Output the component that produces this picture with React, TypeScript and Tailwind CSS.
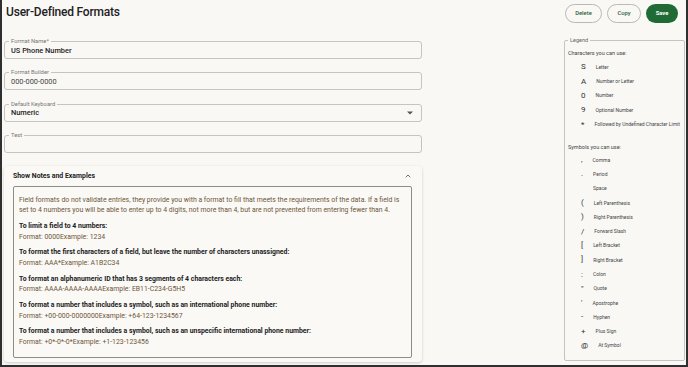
import { ChevronUp } from "lucide-react";

const chars = [
  { sym: "S", label: "Letter" },
  { sym: "A", label: "Number or Letter" },
  { sym: "0", label: "Number" },
  { sym: "9", label: "Optional Number" },
  { sym: "*", label: "Followed by Undefined Character Limit" },
];

const symbols = [
  { sym: ",", label: "Comma" },
  { sym: ".", label: "Period" },
  { sym: "\u00a0", label: "Space" },
  { sym: "(", label: "Left Parenthesis" },
  { sym: ")", label: "Right Parenthesis" },
  { sym: "/", label: "Forward Slash" },
  { sym: "[", label: "Left Bracket" },
  { sym: "]", label: "Right Bracket" },
  { sym: ":", label: "Colon" },
  { sym: "\"", label: "Quote" },
  { sym: "'", label: "Apostrophe" },
  { sym: "-", label: "Hyphen" },
  { sym: "+", label: "Plus Sign" },
  { sym: "@", label: "At Symbol" },
];

const examples = [
  { title: "To limit a field to 4 numbers:", format: "0000", example: "1234" },
  {
    title: "To format the first characters of a field, but leave the number of characters unassigned:",
    format: "AAA*",
    example: "A1B2C34",
  },
  {
    title: "To format an alphanumeric ID that has 3 segments of 4 characters each:",
    format: "AAAA-AAAA-AAAA",
    example: "EB11-C234-G5H5",
  },
  {
    title: "To format a number that includes a symbol, such as an international phone number:",
    format: "+00-000-0000000",
    example: "+64-123-1234567",
  },
  {
    title: "To format a number that includes a symbol, such as an unspecific international phone number:",
    format: "+0*-0*-0*",
    example: "+1-123-123456",
  },
];

function Field({
  label,
  value,
  valueClass = "font-medium text-[#222]",
  select = false,
}: {
  label: string;
  value?: string;
  valueClass?: string;
  select?: boolean;
}) {
  return (
    <div className="relative h-[18px] border border-[#c4c4c2] rounded-[3px] flex items-center pl-[6px] pr-[6px]">
      {/* outlined label sits on the border */}
      <span className="absolute -top-[5px] left-[4px] px-[2px] bg-[#f9f8f5] text-[5.8px] leading-[8px] text-[#777]">
        {label}
      </span>
      <span className={`flex-1 text-[7.4px] leading-none mt-[1px] ${valueClass}`}>{value}</span>
      {select && (
        <svg width="6" height="4" viewBox="0 0 10 5" className="mr-[2px]">
          <path d="M0 0l5 5 5-5z" fill="#555" />
        </svg>
      )}
    </div>
  );
}

function LegendRow({ sym, label }: { sym: string; label: string }) {
  return (
    <div className="flex items-center h-[14.3px]">
      <span className="ml-[13px] text-[8px] leading-none text-[#333]">{sym}</span>
      <span className="ml-[10px] text-[5px] leading-none text-[#444]">{label}</span>
    </div>
  );
}

export default function App() {
  return (
    <div className="w-[688px] h-[367px] overflow-hidden bg-[#f9f8f5] border-x-2 border-b-2 border-[#2f2f2f] font-['Roboto',sans-serif] text-[#222]">
      {/* Header */}
      <div className="flex items-center justify-between pl-[4px] pr-[8px] pt-[3px] h-[24px]">
        <h1 className="text-[12px] font-medium tracking-[-0.2px] text-[#222] -mt-[3px]">
          User-Defined Formats
        </h1>
        <div className="flex items-center gap-[5px]">
          <button className="w-[37px] h-[19px] rounded-full border border-[#b9b9b5] text-[5.8px] font-medium text-[#2f5e3a]">
            Delete
          </button>
          <button className="w-[34px] h-[19px] rounded-full border border-[#b9b9b5] text-[5.8px] font-medium text-[#2f5e3a]">
            Copy
          </button>
          <button className="w-[32px] h-[19px] rounded-full bg-[#1f6a35] text-[5.8px] font-bold text-white">
            Save
          </button>
        </div>
      </div>

      <div className="flex gap-[142px] pl-[2px] pt-[16px]">
        {/* Left column */}
        <div className="w-[418px] flex flex-col">
          <div className="flex flex-col gap-[13.3px] mt-[1px]">
            <Field label="Format Name*" value="US Phone Number" />
            <Field label="Format Builder" value="000-000-0000" valueClass="text-[#444]" />
            <Field label="Default Keyboard" value="Numeric" select />
            <Field label="Test" />
          </div>

          {/* Notes accordion */}
          <div className="mt-[13px] h-[196px] rounded-[4px] bg-[#faf9f6] shadow-[0_1px_3px_rgba(0,0,0,0.18)] pl-[9px] pr-[10px]">
            <div className="flex items-center justify-between h-[20px]">
              <span className="text-[6.9px] font-bold text-[#222]">Show Notes and Examples</span>
              <ChevronUp size={8} strokeWidth={2.5} className="text-[#555]" />
            </div>
            <div className="h-[172px] border border-[#8c8c88] rounded-[2px] pl-[5px] pr-[4px] pt-[8px] text-[6.9px] leading-[10.5px]">
              <p className="text-[#6e5638]">
                Field formats do not validate entries, they provide you with a format to fill that meets the
                requirements of the data. If a field is set to 4 numbers you will be able to enter up to 4 digits, not
                more than 4, but are not prevented from entering fewer than 4.
              </p>
              {examples.map((ex) => (
                <div key={ex.title} className="mt-[5.3px]">
                  <div className="font-bold text-[#222]">{ex.title}</div>
                  <div className="text-[#6e5638]">
                    Format: {ex.format}Example: {ex.example}
                  </div>
                </div>
              ))}
            </div>
          </div>
        </div>

        {/* Legend */}
        <div className="relative w-[121px] h-[321px] border border-[#c4c4c2] rounded-[2px] pl-[3px]">
          <span className="absolute -top-[4px] left-[3px] px-[2px] bg-[#f9f8f5] text-[5.5px] leading-[7px] text-[#666]">
            Legend
          </span>
          <div className="pt-[8px] text-[5.5px] text-[#444]">Characters you can use:</div>
          <div className="mt-[3px]">
            {chars.map((c) => (
              <LegendRow key={c.label} sym={c.sym} label={c.label} />
            ))}
          </div>
          <div className="mt-[11px] text-[5.5px] text-[#444]">Symbols you can use:</div>
          <div className="mt-[2px]">
            {symbols.map((c) => (
              <LegendRow key={c.label} sym={c.sym} label={c.label} />
            ))}
          </div>
        </div>
      </div>
    </div>
  );
}
